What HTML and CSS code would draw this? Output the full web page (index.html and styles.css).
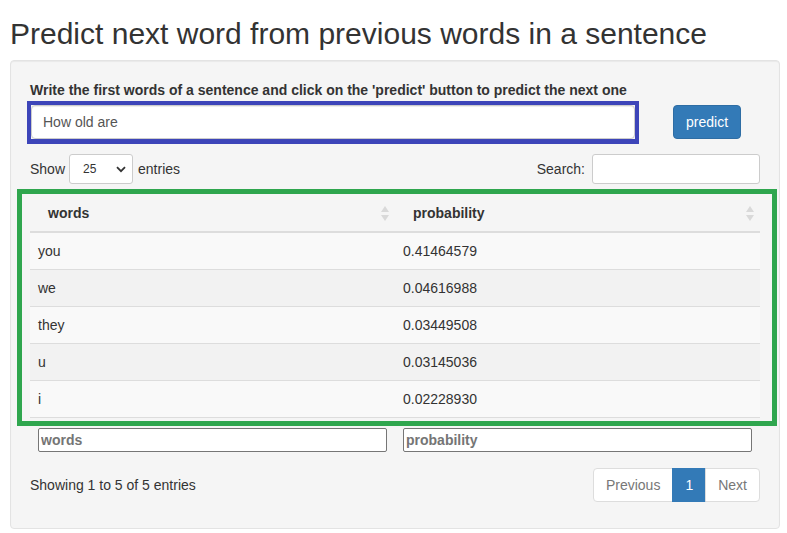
FILE: index.html
```html
<!DOCTYPE html>
<html lang="en">
<head>
<meta charset="utf-8">
<title>Predict next word</title>
<link rel="stylesheet" href="styles.css">
</head>
<body>
<div class="page">
  <h2 class="title">Predict next word from previous words in a sentence</h2>
  <div class="well">
    <div class="predict-row">
      <div class="input-col">
        <label class="control-label" for="words">Write the first words of a sentence and click on the 'predict' button to predict the next one</label>
        <div class="hl-blue"><input id="words" class="form-control" type="text" value="How old are"></div>
      </div>
      <button class="btn-predict" type="button">predict</button>
    </div>

    <div class="dt-top">
      <div class="dt-length">
        <span>Show</span>
        <div class="fake-select">
          <span>25</span>
          <svg width="10" height="7" viewBox="0 0 10 7"><path d="M1 1.2 L5 5.2 L9 1.2" fill="none" stroke="#333" stroke-width="1.8"/></svg>
        </div>
        <span>entries</span>
      </div>
      <div class="dt-filter">
        <span>Search:</span>
        <input class="search-input" type="search">
      </div>
    </div>

    <div class="hl-green">
      <table class="dt">
        <thead>
          <tr>
            <th><div class="th-in"><span>words</span><svg class="sort" width="8" height="15" viewBox="0 0 8 15"><path d="M4 0 L8 6 L0 6 Z M4 15 L8 9 L0 9 Z" fill="#d9d9d9"/></svg></div></th>
            <th><div class="th-in"><span>probability</span><svg class="sort" width="8" height="15" viewBox="0 0 8 15"><path d="M4 0 L8 6 L0 6 Z M4 15 L8 9 L0 9 Z" fill="#d9d9d9"/></svg></div></th>
          </tr>
        </thead>
        <tbody>
          <tr><td>you</td><td>0.41464579</td></tr>
          <tr><td>we</td><td>0.04616988</td></tr>
          <tr><td>they</td><td>0.03449508</td></tr>
          <tr><td>u</td><td>0.03145036</td></tr>
          <tr><td>i</td><td>0.02228930</td></tr>
        </tbody>
      </table>
    </div>
    <table class="dt-foot">
      <tr>
        <td><input class="col-filter" type="text" placeholder="words"></td>
        <td><input class="col-filter" type="text" placeholder="probability"></td>
      </tr>
    </table>

    <div class="dt-bottom">
      <div class="dt-info">Showing 1 to 5 of 5 entries</div>
      <ul class="pagination">
        <li class="pg disabled first">Previous</li>
        <li class="pg active">1</li>
        <li class="pg disabled last">Next</li>
      </ul>
    </div>
  </div>
</div>
</body>
</html>
```

FILE: styles.css
```css
* { box-sizing: border-box; }
html, body { margin: 0; padding: 0; background: #fff; }
body {
  font-family: "Liberation Sans", Arial, Helvetica, sans-serif;
  font-size: 14px;
  line-height: 20px;
  color: #333;
}
.page { padding: 0 7px 0 10px; }
.title {
  margin: 17px 0 10px;
  font-size: 30px;
  font-weight: 500;
  line-height: 33px;
  color: #333;
}
.well {
  background: #f5f5f5;
  border: 1px solid #e3e3e3;
  border-radius: 4px;
  box-shadow: inset 0 1px 1px rgba(0,0,0,0.05);
  padding: 19px 19px 26px;
}
.predict-row { display: flex; align-items: flex-end; }
.input-col { width: 609px; display: flex; flex-direction: column; }
.control-label {
  display: block;
  font-weight: bold;
  font-size: 14px;
  line-height: 20px;
  margin-bottom: 1px;
  white-space: nowrap;
}
.hl-blue {
  margin-left: -3px;
  width: 612px;
  border: 4px solid #3d45b9;
  border-bottom-width: 5px;
}
.form-control {
  display: block;
  width: 100%;
  height: 34px;
  padding: 6px 11px;
  font-family: inherit;
  font-size: 14px;
  color: #555;
  background: #fff;
  border: 1px solid #ccc;
  border-radius: 4px;
  box-shadow: inset 0 1px 1px rgba(0,0,0,0.075);
  outline: none;
}
.btn-predict {
  margin: 0 0 5px 34px;
  width: 68px;
  height: 34px;
  padding: 6px 12px;
  font-family: inherit;
  font-size: 14px;
  line-height: 20px;
  color: #fff;
  background: #337ab7;
  border: 1px solid #2e6da4;
  border-radius: 4px;
}
.dt-top {
  margin-top: 10px;
  display: flex;
  justify-content: space-between;
  align-items: center;
  height: 30px;
}
.dt-length, .dt-filter { display: flex; align-items: center; }
.fake-select {
  margin: 0 5px 0 4px;
  width: 64px;
  height: 30px;
  background: #fff;
  border: 1px solid #ccc;
  border-radius: 3px;
  display: flex;
  align-items: center;
  justify-content: space-between;
  padding: 0 6px 0 13px;
  font-size: 12px;
}
.search-input {
  margin-left: 7px;
  width: 168px;
  height: 30px;
  background: #fff;
  border: 1px solid #ccc;
  border-radius: 3px;
  font-family: inherit;
  font-size: 12px;
  outline: none;
}
.hl-green {
  margin: 5px -17px 0 -13px;
  border: 5px solid #2fa64e;
  padding: 0 12px 3px 8px;
}
.dt {
  width: 100%;
  border-collapse: collapse;
  table-layout: fixed;
}
.dt th {
  text-align: left;
  font-weight: bold;
  padding: 9px 6px 8px 18px;
  border-bottom: 2px solid #ddd;
}
.th-in { display: flex; justify-content: space-between; align-items: center; }
.sort { display: block; }
.dt td {
  padding: 8px;
  border-top: 1px solid #ddd;
  height: 37px;
}
.dt tbody tr:nth-child(odd) { background: #f9f9f9; }
.dt tbody tr:nth-child(even) { background: #f2f2f2; }
.dt tbody tr:last-child td { border-bottom: 1px solid #ddd; }
.dt-foot {
  width: 100%;
  border-collapse: collapse;
  table-layout: fixed;
}
.dt-foot td { padding: 2px 8px 8px; }
.col-filter {
  display: block;
  width: 100%;
  height: 24px;
  padding: 1px 2px;
  font-family: inherit;
  font-size: 14px;
  font-weight: bold;
  background: #fff;
  border: 1px solid #767676;
  border-radius: 2px;
  outline: none;
}
.col-filter::placeholder { color: #757575; font-weight: bold; }
.dt-bottom {
  margin-top: 8px;
  display: flex;
  justify-content: space-between;
  align-items: center;
  height: 34px;
}
.pagination {
  list-style: none;
  margin: 0;
  padding: 0;
  display: flex;
}
.pg {
  padding: 6px 12px;
  line-height: 20px;
  border: 1px solid #ddd;
  background: #fff;
  margin-left: -1px;
}
.pg.disabled { color: #777; }
.pg.first { margin-left: 0; border-radius: 4px 0 0 4px; }
.pg.last { border-radius: 0 4px 4px 0; }
.pg.active { background: #337ab7; border-color: #337ab7; color: #fff; }
```
